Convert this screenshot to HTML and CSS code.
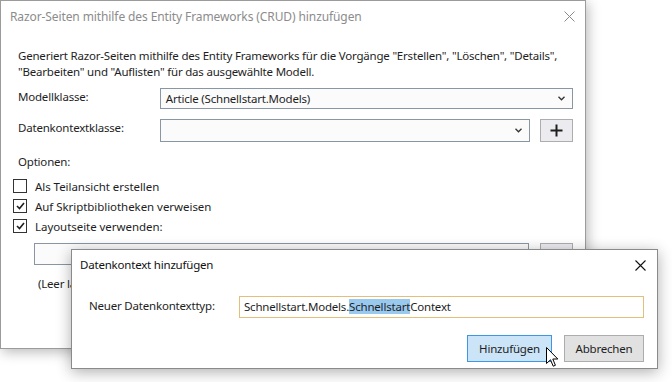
FILE: index.html
```html
<!DOCTYPE html>
<html lang="de">
<head>
<meta charset="utf-8">
<title>Razor-Seiten</title>
<link rel="stylesheet" href="styles.css">
</head>
<body>
<div class="desktop">
  <div class="window main">
    <div class="titlebar">
      <span class="title big">Razor-Seiten mithilfe des Entity Frameworks (CRUD) hinzufügen</span>
      <svg class="close grey" width="11" height="11" viewBox="0 0 11 11"><path d="M0.5 0.5 L10.5 10.5 M10.5 0.5 L0.5 10.5" stroke="#8a8a8a" stroke-width="1"/></svg>
    </div>
    <div class="content">
      <p class="desc">Generiert Razor-Seiten mithilfe des Entity Frameworks für die Vorgänge "Erstellen", "Löschen", "Details", "Bearbeiten" und "Auflisten" für das ausgewählte Modell.</p>
      <div class="row row-model">
        <span class="label">Modellklasse:</span>
        <div class="select wide">
          <span class="value">Article (Schnellstart.Models)</span>
          <svg class="chev" width="7" height="5" viewBox="0 0 7 5"><path d="M0.5 0.8 L3.5 3.8 L6.5 0.8" fill="none" stroke="#333" stroke-width="1.3"/></svg>
        </div>
      </div>
      <div class="row row-ctx">
        <span class="label">Datenkontextklasse:</span>
        <div class="select narrow">
          <span class="value"></span>
          <svg class="chev" width="7" height="5" viewBox="0 0 7 5"><path d="M0.5 0.8 L3.5 3.8 L6.5 0.8" fill="none" stroke="#333" stroke-width="1.3"/></svg>
        </div>
        <div class="plus-btn">
          <svg width="13" height="13" viewBox="0 0 13 13"><path d="M6.5 0.5 V12.5 M0.5 6.5 H12.5" stroke="#1e1e1e" stroke-width="2"/></svg>
        </div>
      </div>
      <div class="options">Optionen:</div>
      <div class="checks">
        <div class="check"><span class="box"></span><span>Als Teilansicht erstellen</span></div>
        <div class="check"><span class="box"><svg width="9" height="8" viewBox="0 0 9 8"><path d="M1 4 L3.5 6.5 L8 1" fill="none" stroke="#1e1e1e" stroke-width="1.6"/></svg></span><span>Auf Skriptbibliotheken verweisen</span></div>
        <div class="check"><span class="box"><svg width="9" height="8" viewBox="0 0 9 8"><path d="M1 4 L3.5 6.5 L8 1" fill="none" stroke="#1e1e1e" stroke-width="1.6"/></svg></span><span>Layoutseite verwenden:</span></div>
      </div>
      <div class="row row-layout">
        <div class="layout-input"></div>
        <div class="small-btn"></div>
      </div>
      <div class="hint">(Leer lassen, wenn sie in einer Razor-Datei _viewstart festgelegt ist)</div>
    </div>
  </div>

  <div class="window dialog">
    <div class="titlebar dlg-title">
      <span class="title dark">Datenkontext hinzufügen</span>
      <svg class="close" width="11" height="11" viewBox="0 0 11 11"><path d="M0.5 0.5 L10.5 10.5 M10.5 0.5 L0.5 10.5" stroke="#111" stroke-width="1.1"/></svg>
    </div>
    <div class="dlg-body">
      <div class="dlg-row">
        <span class="dlg-label">Neuer Datenkontexttyp:</span>
        <div class="dlg-input">Schnellstart.Models.<span class="sel">Schnellstart</span>Context</div>
      </div>
      <div class="dlg-buttons">
        <div class="btn primary">Hinzufügen</div>
        <div class="btn">Abbrechen</div>
      </div>
    </div>
  </div>

  <svg class="cursor" width="13" height="21" viewBox="0 0 13 21"><path d="M0.5 0.5 L0.5 16.5 L4.5 12.8 L7.2 19.2 L9.4 18.3 L6.8 12 L11.8 12 Z" fill="#fff" stroke="#000" stroke-width="1" stroke-linejoin="miter"/></svg>
</div>
</body>
</html>
```
FILE: styles.css
```css
* { box-sizing: border-box; }
html, body { margin: 0; padding: 0; background: #fff; }
body {
  font-family: "Segoe UI", "Noto Sans", "Open Sans", sans-serif;
  font-size: 11.5px;
  letter-spacing: -0.2px;
  color: #1e1e1e;
}
.desktop {
  position: relative;
  width: 672px;
  height: 382px;
  overflow: hidden;
}
.window {
  position: absolute;
  background: #fff;
  border: 1px solid #9b9b9b;
}
.main {
  left: 0;
  top: 0;
  width: 586px;
  height: 349px;
  box-shadow: 2px 3px 12px rgba(0,0,0,0.28);
}
.titlebar {
  display: flex;
  align-items: center;
  justify-content: space-between;
  height: 31px;
  padding: 0 10px 0 9px;
}
.title { color: #8c8c8c; line-height: 16px; }
.title.big { font-size: 12px; letter-spacing: -0.1px; }
.title.dark { color: #111; }
.content { padding: 0 12px 0 17px; }
.desc { margin: 16px 0 0; line-height: 16px; }
.row { display: flex; align-items: flex-start; }
.row-model { margin-top: 8px; }
.row-ctx { margin-top: 10px; }
.label { width: 142px; line-height: 18px; padding-top: 0; }
.row-ctx .label { line-height: 16px; padding-top: 1px; }
.select {
  display: flex;
  align-items: center;
  justify-content: space-between;
  border: 1px solid #8996a4;
  background: #fbfbfb;
  padding: 0 7px 0 5px;
}
.select.wide { width: 414px; height: 21px; }
.select.narrow { width: 371px; height: 23px; }
.chev { display: block; }
.plus-btn {
  width: 33px;
  height: 23px;
  margin-left: 10px;
  border: 1px solid #adadad;
  background: #ececf0;
  display: flex;
  align-items: center;
  justify-content: center;
}
.options { margin-top: 12px; line-height: 16px; }
.checks { margin-left: -5px; margin-top: 6px; letter-spacing: -0.05px; }
.check { display: flex; align-items: center; height: 20px; }
.box {
  width: 14px;
  height: 14px;
  border: 1px solid #333;
  background: #fff;
  margin-right: 8px;
  display: flex;
  align-items: center;
  justify-content: center;
}
.row-layout { margin-top: 7px; margin-left: 16px; }
.layout-input {
  width: 497px;
  height: 22px;
  border: 1px solid #8996a4;
  background: #fbfbfb;
}
.small-btn {
  width: 33px;
  height: 23px;
  margin-left: 11px;
  border: 1px solid #adadad;
  background: #ececf0;
}
.hint { margin: 10px 0 0 20px; line-height: 16px; white-space: nowrap; }

.dialog {
  left: 71px;
  top: 249px;
  width: 587px;
  height: 120px;
  border-color: #8a8a8a;
  box-shadow: 0 3px 14px rgba(0,0,0,0.32);
}
.dlg-title { height: 30px; padding: 0 11px 0 8px; }
.dlg-body { padding: 16px 13px 0 17px; }
.dlg-row { display: flex; align-items: center; }
.dlg-label { width: 150px; line-height: 16px; margin-top: -3px; }
.dlg-input {
  flex: 0 0 405px;
  height: 22px;
  border: 1px solid #e2c07c;
  padding: 0 4px;
  line-height: 20px;
  white-space: nowrap;
}
.sel { background: #99c9ef; }
.dlg-buttons {
  display: flex;
  justify-content: flex-end;
  gap: 12px;
  margin-top: 17px;
}
.btn {
  height: 27px;
  border: 1px solid #adadad;
  background: #e1e1e1;
  display: flex;
  align-items: center;
  justify-content: center;
  width: 80px;
}
.btn.primary {
  width: 85px;
  background: #cce4f7;
  border-color: #3d97e4;
}
.cursor {
  position: absolute;
  left: 546px;
  top: 347px;
}
```
